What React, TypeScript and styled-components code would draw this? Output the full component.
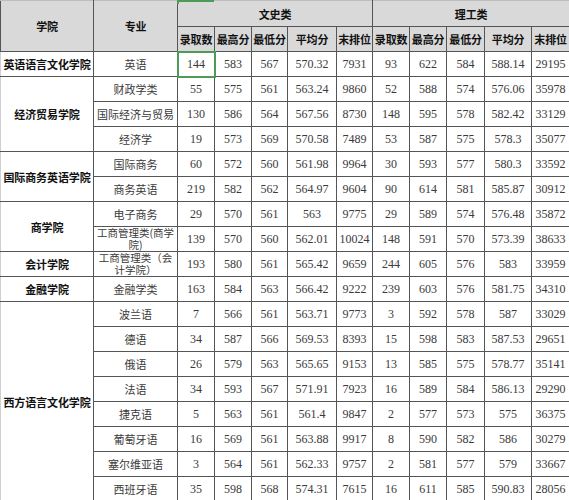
import React from "react";
import styled, { createGlobalStyle, css } from "styled-components";

const Global = createGlobalStyle`
  html, body { margin: 0; padding: 0; background: #ffffff; }
  body { width: 569px; height: 500px; overflow: hidden; }
`;

const Wrap = styled.div`
  position: relative;
  width: 569px;
  height: 500px;
  overflow: hidden;
  background: #fff;
`;

const Table = styled.table`
  width: 569px;
  table-layout: fixed;
  border-collapse: collapse;
  border-spacing: 0;
  font-family: "Noto Sans CJK SC", sans-serif;
  font-size: 11px;
  color: #333;
`;

const Row = styled.tr<{ $h?: number }>`
  height: ${(p) => p.$h ?? 25}px;
`;

const cellBase = css`
  padding: 0;
  border: 1px solid #555;
  text-align: center;
  vertical-align: middle;
  overflow: hidden;
  white-space: nowrap;
`;

const HeadCell = styled.th`
  ${cellBase};
  background: #d9d9d9;
  font-weight: 700;
  color: #111;
  letter-spacing: -0.2px;
  line-height: 12px;
`;

const GroupHead = styled(HeadCell)`
  border-top-color: #bdbdbd;
`;

const CollegeCell = styled.td`
  ${cellBase};
  border-left-color: #cfcfcf;
  font-weight: 700;
  color: #111;
  letter-spacing: -0.1px;
`;

const MajorCell = styled.td<{ $wrap?: boolean }>`
  ${cellBase};
  color: #3a3a3a;
  ${(p) =>
    p.$wrap &&
    css`
      font-size: 10.5px;
      line-height: 12px;
      white-space: normal;
    `}
`;

const NumCell = styled.td<{ $selected?: boolean }>`
  ${cellBase};
  font-family: "Liberation Serif", serif;
  font-size: 12px;
  color: #3a3a3a;
  ${(p) =>
    p.$selected &&
    css`
      outline: 2px solid #4e9a57;
      outline-offset: -1px;
    `}
`;

const ColumnMark = styled.div`
  position: absolute;
  left: 177px;
  top: 0;
  width: 37px;
  height: 4px;
  border-top: 2px solid #4e9a57;
  border-left: 2px solid #4e9a57;
  box-sizing: border-box;
`;

type Rec = {
  college?: string;
  span?: number;
  major: React.ReactNode;
  wrap?: boolean;
  w: (string | number)[];
  l: (string | number)[];
};

const rows: Rec[] = [
  { college: "英语语言文化学院", span: 1, major: "英语", w: [144, 583, 567, "570.32", 7931], l: [93, 622, 584, "588.14", 29195] },
  { college: "经济贸易学院", span: 3, major: "财政学类", w: [55, 575, 561, "563.24", 9860], l: [52, 588, 574, "576.06", 35978] },
  { major: "国际经济与贸易", w: [130, 586, 564, "567.56", 8730], l: [148, 595, 578, "582.42", 33129] },
  { major: "经济学", w: [19, 573, 569, "570.58", 7489], l: [53, 587, 575, "578.3", 35077] },
  { college: "国际商务英语学院", span: 2, major: "国际商务", w: [60, 572, 560, "561.98", 9964], l: [30, 593, 577, "580.3", 33592] },
  { major: "商务英语", w: [219, 582, 562, "564.97", 9604], l: [90, 614, 581, "585.87", 30912] },
  { college: "商学院", span: 2, major: "电子商务", w: [29, 570, 561, 563, 9775], l: [29, 589, 574, "576.48", 35872] },
  { major: <>工商管理类(商学<br />院)</>, wrap: true, w: [139, 570, 560, "562.01", 10024], l: [148, 591, 570, "573.39", 38633] },
  { college: "会计学院", span: 1, major: <>工商管理类（会<br />计学院）</>, wrap: true, w: [193, 580, 561, "565.42", 9659], l: [244, 605, 576, 583, 33959] },
  { college: "金融学院", span: 1, major: "金融学类", w: [163, 584, 563, "566.42", 9222], l: [239, 603, 576, "581.75", 34310] },
  { college: "西方语言文化学院", span: 8, major: "波兰语", w: [7, 566, 561, "563.71", 9773], l: [3, 592, 578, 587, 33029] },
  { major: "德语", w: [34, 587, 566, "569.53", 8393], l: [15, 598, 583, "587.53", 29651] },
  { major: "俄语", w: [26, 579, 563, "565.65", 9153], l: [13, 585, 575, "578.77", 35141] },
  { major: "法语", w: [34, 593, 567, "571.91", 7923], l: [16, 589, 584, "586.13", 29290] },
  { major: "捷克语", w: [5, 563, 561, "561.4", 9847], l: [2, 577, 573, 575, 36375] },
  { major: "葡萄牙语", w: [16, 569, 561, "563.88", 9917], l: [8, 590, 582, 586, 30279] },
  { major: "塞尔维亚语", w: [3, 564, 561, "562.33", 9757], l: [2, 581, 577, 579, 33667] },
  { major: "西班牙语", w: [35, 598, 568, "574.31", 7615], l: [16, 611, 585, "590.83", 28056] },
];

const widths = [93, 84, 37, 37, 36, 49, 36, 37, 37, 38, 47, 38];
const sub = ["录取数", "最高分", "最低分", "平均分", "末排位"];

export default function App() {
  return (
    <Wrap>
      <Global />
      <Table>
        <colgroup>
          {widths.map((w, i) => (
            <col key={i} style={{ width: w }} />
          ))}
        </colgroup>
        <thead>
          <Row $h={26}>
            <GroupHead rowSpan={2}>学院</GroupHead>
            <GroupHead rowSpan={2}>专业</GroupHead>
            <GroupHead colSpan={5}>文史类</GroupHead>
            <GroupHead colSpan={5}>理工类</GroupHead>
          </Row>
          <Row $h={25}>
            {sub.map((s) => (
              <HeadCell key={"w" + s}>{s}</HeadCell>
            ))}
            {sub.map((s) => (
              <HeadCell key={"l" + s}>{s}</HeadCell>
            ))}
          </Row>
        </thead>
        <tbody>
          {rows.map((r, i) => (
            <Row key={i}>
              {r.college && <CollegeCell rowSpan={r.span}>{r.college}</CollegeCell>}
              <MajorCell $wrap={r.wrap}>{r.major}</MajorCell>
              {r.w.map((v, j) => (
                <NumCell key={"w" + j} $selected={i === 0 && j === 0}>
                  {v}
                </NumCell>
              ))}
              {r.l.map((v, j) => (
                <NumCell key={"l" + j}>{v}</NumCell>
              ))}
            </Row>
          ))}
        </tbody>
      </Table>
      <ColumnMark />
    </Wrap>
  );
}
